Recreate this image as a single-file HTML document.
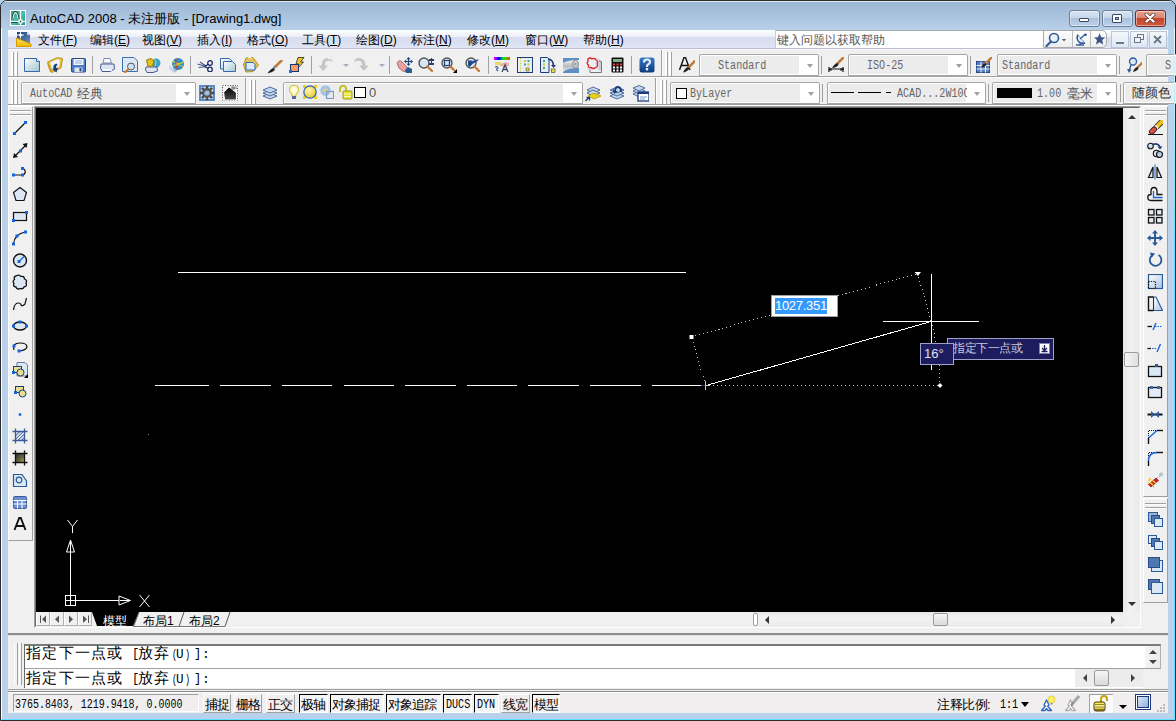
<!DOCTYPE html><html><head><meta charset="utf-8"><style>
*{margin:0;padding:0;box-sizing:border-box}
html,body{width:1176px;height:721px;overflow:hidden;background:#b9d1ea}
body{position:relative;font-family:"Liberation Sans",sans-serif;font-size:12px;color:#000}
div,span,svg{position:absolute;display:block}
.t{white-space:nowrap;line-height:15px}
.grip{width:1px;background:#a0a0a0;box-shadow:1px 0 0 #fff}
.vsep{width:1px;background:#a0a0a0;box-shadow:1px 0 0 #fff}
.hsep{height:1px;background:#a0a0a0;box-shadow:0 1px 0 #fff}
.combo{height:22px;border:1px solid #a5a5a5;border-radius:2px 2px 0 0;background:#fff;overflow:hidden}
.combo .fill{left:1px;top:1px;right:19px;bottom:1px;background:#ececec}
.combo .dd{right:0;top:0;width:18px;height:20px;background:#fff}
.combo .dd:after{content:"";position:absolute;left:7px;top:9px;border-left:3.5px solid transparent;border-right:3.5px solid transparent;border-top:4px solid #a0a0a0}
.mono{font-family:"Liberation Mono",monospace;font-size:12px;line-height:20px;color:#666;white-space:nowrap;transform:scaleX(.84);transform-origin:0 0}
</style></head><body>
<div style="left:0;top:0;width:1176px;height:721px;border:1px solid #2b2b2b;border-radius:7px 7px 0 0;background:#b9d1ea"></div>
<div style="left:1px;top:1px;width:1174px;height:29px;border-radius:6px 6px 0 0;background:linear-gradient(#dfe8f3 0px,#dfe8f3 1px,#9bb6d4 1px,#b9d0e9 29px)"></div>
<div style="left:1px;top:30px;width:7px;height:690px;background:#bad2ea"></div>
<div style="left:1168px;top:30px;width:7px;height:690px;background:#bad2ea"></div>
<svg style="left:10px;top:10px" width="16" height="16" viewBox="0 0 16 16"><defs><linearGradient id="g0" x1="0" y1="0" x2="1" y2="1"><stop offset="0" stop-color="#2aa894"/><stop offset=".5" stop-color="#4cc0ac"/><stop offset="1" stop-color="#1f9683"/></linearGradient></defs><rect x="0" y="0" width="16" height="16" fill="#fff"/><rect x="1" y="1" width="14" height="14" fill="url(#g0)"/><path d="M2.5 9.5 Q3.5 2 5.5 2 Q7.5 2 8.5 9.5" stroke="#0b3b34" stroke-width="2.2" fill="none"/><path d="M2.8 9.5 Q3.8 2.6 5.5 2.6 Q7.2 2.6 8.2 9.5" stroke="#e8fff8" stroke-width="1.1" fill="none"/><path d="M1 11.5 H15" stroke="#fff" stroke-width="1.2"/><path d="M1 12.5 H8" stroke="#0b3b34" stroke-width=".8"/><path d="M10.5 1 V15" stroke="#fff" stroke-width="1.2"/><rect x="8.5" y="9.5" width="4" height="4" fill="#fff"/><rect x="9.8" y="10.8" width="1.5" height="1.5" fill="#0b3b34"/></svg>
<div class="t" style="left:30px;top:11px;font-size:13px;color:#000">AutoCAD 2008 - 未注册版 - [Drawing1.dwg]</div>
<div style="left:1069px;top:10px;width:31px;height:17px;border:1px solid #6d7f96;border-radius:3px;background:linear-gradient(#d7e4f2 0%,#c6d7eb 45%,#a9c0dc 50%,#bcd1ea 100%);box-shadow:inset 0 0 0 1px rgba(255,255,255,.45)"></div>
<div style="left:1102px;top:10px;width:31px;height:17px;border:1px solid #6d7f96;border-radius:3px;background:linear-gradient(#d7e4f2 0%,#c6d7eb 45%,#a9c0dc 50%,#bcd1ea 100%);box-shadow:inset 0 0 0 1px rgba(255,255,255,.45)"></div>
<div style="left:1135px;top:10px;width:31px;height:17px;border:1px solid #6b2a2a;border-radius:3px;background:linear-gradient(#e8a393 0%,#d98472 45%,#c4452a 50%,#cf5a3b 100%);box-shadow:inset 0 0 0 1px rgba(255,255,255,.45)"></div>
<div style="left:1079px;top:18px;width:10px;height:4px;background:#fff;border:1px solid #3b4a5e;border-radius:1px"></div>
<div style="left:1112px;top:14px;width:10px;height:9px;background:#fff;border:1px solid #3b4a5e;border-radius:1px"></div>
<div style="left:1115px;top:17px;width:4px;height:3px;background:#a8bed8;border:1px solid #3b4a5e"></div>
<svg style="left:1144px;top:13px" width="12" height="10" viewBox="0 0 12 10"><path d="M2.5 1.5 L9.5 8.5 M9.5 1.5 L2.5 8.5" stroke="#5a3434" stroke-width="3.8" stroke-linecap="round"/><path d="M2.5 1.5 L9.5 8.5 M9.5 1.5 L2.5 8.5" stroke="#fff" stroke-width="2.4" stroke-linecap="round"/></svg>
<div style="left:8px;top:30px;width:1160px;height:19px;background:linear-gradient(#fdfdfe 0px,#eceff8 7px,#d6dcee 7px,#dfe5f3 18px,#b8bfd2 18px)"></div>
<svg style="left:16px;top:31px" width="16" height="16" viewBox="0 0 16 16"><defs><linearGradient id="gm1" x1="0" y1="0" x2="1" y2="1"><stop offset="0" stop-color="#1a3f78"/><stop offset="1" stop-color="#6f93c0"/></linearGradient><linearGradient id="gm2" x1="0" y1="0" x2="0" y2="1"><stop offset="0" stop-color="#ffe766"/><stop offset="1" stop-color="#e8b800"/></linearGradient></defs><path d="M1 1 H11 L14 4 V13 L1 7 Z" fill="url(#gm1)"/><path d="M11 1 L14 4 H11 Z" fill="#c9d6e6"/><circle cx="4.5" cy="4" r="1.6" fill="#fff"/><path d="M4.5 0.5 V7.5 M1 4 H8" stroke="#fff" stroke-width=".9"/><path d="M0.5 7.2 L15 13 V15.5 H0.5 Z" fill="url(#gm2)" stroke="#d89a00" stroke-width="1"/></svg>
<div class="t" style="left:38px;top:33px;font-size:12px">文件(<u>F</u>)</div>
<div class="t" style="left:90px;top:33px;font-size:12px">编辑(<u>E</u>)</div>
<div class="t" style="left:142px;top:33px;font-size:12px">视图(<u>V</u>)</div>
<div class="t" style="left:197px;top:33px;font-size:12px">插入(<u>I</u>)</div>
<div class="t" style="left:247px;top:33px;font-size:12px">格式(<u>O</u>)</div>
<div class="t" style="left:302px;top:33px;font-size:12px">工具(<u>T</u>)</div>
<div class="t" style="left:356px;top:33px;font-size:12px">绘图(<u>D</u>)</div>
<div class="t" style="left:411px;top:33px;font-size:12px">标注(<u>N</u>)</div>
<div class="t" style="left:467px;top:33px;font-size:12px">修改(<u>M</u>)</div>
<div class="t" style="left:525px;top:33px;font-size:12px">窗口(<u>W</u>)</div>
<div class="t" style="left:583px;top:33px;font-size:12px">帮助(<u>H</u>)</div>
<div style="left:775px;top:30px;width:269px;height:18px;background:#fff;border-top:1px solid #a9acb4;border-left:1px solid #c9ccd4"></div>
<div class="t" style="left:777px;top:33px;font-size:12px;color:#555">键入问题以获取帮助</div>
<div style="left:1043px;top:30px;width:64px;height:18px;background:linear-gradient(#fdfdfd,#eeeeee);border:1px solid #a9a9a9;border-radius:0 5px 5px 0"></div>
<div style="left:1072px;top:31px;width:1px;height:16px;background:#bdbdbd"></div>
<div style="left:1090px;top:31px;width:1px;height:16px;background:#bdbdbd"></div>
<svg style="left:1045px;top:32px" width="22" height="16" viewBox="0 0 22 16"><circle cx="9" cy="6" r="4.5" fill="#e8f0fa" stroke="#2f5b98" stroke-width="1.6"/><path d="M6 9.5 L1.5 14" stroke="#2f5b98" stroke-width="2.2" stroke-linecap="round"/><path d="M17 7 L21 7 L19 9.5 Z" fill="#555"/></svg>
<svg style="left:1075px;top:33px" width="12" height="13" viewBox="0 0 12 13"><path d="M2.5 1 Q0 5 3 9 Q6 12 10.5 10.5 Z" fill="#2a4f8f"/><path d="M3.5 2.5 Q2 5.5 4 8 Q6.5 10 9 9.5 Z" fill="#e6eef8"/><path d="M5 6 L10 1.5" stroke="#3a62a8" stroke-width="1.3"/><circle cx="10.5" cy="1.8" r="1.3" fill="#2a4f8f"/><path d="M6 10 L4.5 11.5 M1 12 H9" stroke="#3a62a8" stroke-width="1.4"/></svg>
<svg style="left:1094px;top:33px" width="12" height="12" viewBox="0 0 12 12"><path d="M5.6 0.3 L7.2 4.2 L11.3 4.4 L8.2 7.1 L9.2 11.6 L5.6 9.2 L2 11.6 L3 7.1 L-0.1 4.4 L4 4.2 Z" fill="#3b5587"/></svg>
<div style="left:1111px;top:31px;width:18px;height:17px;border:1px solid #b8c6d8;background:linear-gradient(#f4f8fc,#dde8f4)"></div>
<div style="left:1130px;top:31px;width:18px;height:17px;border:1px solid #b8c6d8;background:linear-gradient(#f4f8fc,#dde8f4)"></div>
<div style="left:1149px;top:31px;width:18px;height:17px;border:1px solid #b8c6d8;background:linear-gradient(#f4f8fc,#dde8f4)"></div>
<div style="left:1116px;top:42px;width:8px;height:2px;background:#6d7784"></div>
<svg style="left:1134px;top:34px" width="10" height="10" viewBox="0 0 10 10"><rect x="3.5" y="0.5" width="6" height="5" fill="none" stroke="#6d7784" stroke-width="1"/><rect x="0.5" y="3.5" width="6" height="5" fill="#eef3f9" stroke="#6d7784" stroke-width="1"/></svg>
<svg style="left:1153px;top:35px" width="9" height="9" viewBox="0 0 9 9"><path d="M1 1 L8 8 M8 1 L1 8" stroke="#6d7784" stroke-width="1.8"/></svg>
<div style="left:8px;top:49px;width:1160px;height:58px;background:#f0f0f0"></div>
<div style="left:8px;top:49px;width:1160px;height:1px;background:#fafafa"></div>
<div class="hsep" style="left:8px;top:76px;width:1160px"></div>
<div class="hsep" style="left:8px;top:104px;width:1160px"></div>
<div style="left:11px;top:52px;width:2px;height:24px;background:#fff"></div>
<div style="left:13px;top:52px;width:1px;height:24px;background:#a0a0a0"></div>
<div style="left:15px;top:52px;width:2px;height:24px;background:#fff"></div>
<div style="left:17px;top:52px;width:1px;height:24px;background:#a0a0a0"></div>
<svg style="left:24px;top:58px" width="16" height="16" viewBox="0 0 16 16"><defs><linearGradient id="gn" x1="0" y1="0" x2="1" y2="1"><stop offset="0" stop-color="#ffffff"/><stop offset="1" stop-color="#9fc3cf"/></linearGradient></defs><path d="M0.5 0.5 H12.5 L15.5 3.5 V13.5 H0.5 Z" fill="url(#gn)" stroke="#3568ad" stroke-width="1"/><path d="M12.5 0.5 V3.5 H15.5" fill="#fff" stroke="#3568ad" stroke-width="1"/></svg>
<svg style="left:47px;top:57px" width="16" height="16" viewBox="0 0 16 16"><path d="M0.5 5 L10.5 0.5 L15.5 1.5 L14 11 L5 15.5 Z" fill="#e9be3c" stroke="#b8901c" stroke-width=".9"/><path d="M3 5.5 L11 2 L13 3 L12 10 L5.5 13 Z" fill="#eef6fc"/><path d="M0.5 5 L5 15.5 L3 15 L0.5 8 Z" fill="#c99a20"/><path d="M9.5 6.5 Q5.5 7.5 6.5 11.5 L5 12 L9.5 15.5 L11 10.5 L9 11 Q8.5 9 10.5 8 Z" fill="#1d3f78"/></svg>
<svg style="left:71px;top:58px" width="16" height="16" viewBox="0 0 16 16"><rect x="0.5" y="0.5" width="14" height="13.5" rx="1" fill="#4b7cc4" stroke="#22467f"/><rect x="2.5" y="1" width="10" height="6" fill="#f4f7fc"/><path d="M4 3 H11 M4 5 H11" stroke="#8aa6d0" stroke-width=".9"/><rect x="3.5" y="9.5" width="8" height="4.5" fill="#dfe6f0"/><rect x="8.5" y="10" width="2" height="3.5" fill="#2a4f8a"/></svg>
<div style="left:92px;top:56px;width:1px;height:18px;background:#a0a0a0"></div>
<svg style="left:100px;top:58px" width="15" height="14" viewBox="0 0 15 14"><path d="M4 0.5 H10 L11.5 5 H3 Z" fill="#fff" stroke="#7e8db8"/><path d="M1 6 H14 L14.5 11 L10 13.5 H2 L0.5 10 Z" fill="#dfe4f2" stroke="#4a5c95"/><path d="M3 12 H12" stroke="#fff" stroke-width="1.5"/></svg>
<svg style="left:122px;top:57px" width="16" height="16" viewBox="0 0 16 16"><path d="M0.5 0.5 H12 L15.5 4 V14.5 H0.5 Z" fill="#dbe9f4" stroke="#3d70b2"/><circle cx="9" cy="9.5" r="3.5" fill="#cde1f3" stroke="#556"/><path d="M6.5 12 L2.5 16" stroke="#d47a2a" stroke-width="2"/></svg>
<svg style="left:145px;top:57px" width="16" height="16" viewBox="0 0 16 16"><circle cx="11" cy="6" r="4.5" fill="#3fa0c8"/><path d="M9 2 Q13 6 9 10" stroke="#9fe0a0" fill="none"/><path d="M1 10 H12 L12.5 14 L8 15.5 H2 L0.5 13 Z" fill="#dfe4f2" stroke="#4a5c95"/><path d="M1.5 3 L6 1.5 L9 4 L7.5 9 L3 9.5 Z" fill="#e6c21a" stroke="#9a7a00"/></svg>
<svg style="left:168px;top:57px" width="16" height="16" viewBox="0 0 16 16"><path d="M1 8 L6 12 L6 16 L1 12 Z" fill="#c9d4e8"/><path d="M6 12 L9 10 L9 14 L6 16 Z" fill="#aebbd3"/><circle cx="10" cy="7" r="6" fill="#2f8fc9"/><path d="M5 4 Q10 9 15 5" stroke="#e0d020" fill="none" stroke-width="1.2"/><path d="M8 1.5 Q7 8 10 13" stroke="#d23b2a" fill="none" stroke-width="1.2"/><path d="M4.5 9 Q10 6 15.5 10" stroke="#e0d020" fill="none" stroke-width="1"/></svg>
<div style="left:190px;top:56px;width:1px;height:18px;background:#a0a0a0"></div>
<svg style="left:197px;top:60px" width="16" height="12" viewBox="0 0 16 12"><path d="M0.5 4 L9 6.5 M1.5 7.5 L9 6.8 M3 2 L9 6" stroke="#445a8a" stroke-width="1.1"/><circle cx="13" cy="3" r="2.3" fill="none" stroke="#1d2a66" stroke-width="1.3"/><circle cx="13" cy="9.5" r="2.3" fill="none" stroke="#1d2a66" stroke-width="1.3"/><path d="M8 6.5 L11.2 4.2 M8 6.8 L11.2 8.5" stroke="#1d2a66" stroke-width="1.2"/></svg>
<svg style="left:220px;top:58px" width="16" height="14" viewBox="0 0 16 14"><defs><linearGradient id="gc" x1="0" y1="0" x2="1" y2="1"><stop offset="0" stop-color="#fff"/><stop offset="1" stop-color="#a8c8d4"/></linearGradient></defs><path d="M0.5 0.5 H9.5 L11.5 2.5 V11 H0.5 Z" fill="url(#gc)" stroke="#3568ad"/><path d="M3.5 3.5 H12.5 L15.5 6.5 V13.5 H3.5 Z" fill="url(#gc)" stroke="#3568ad"/></svg>
<svg style="left:243px;top:57px" width="16" height="16" viewBox="0 0 16 16"><path d="M3 1 L10 0.5 L15.5 8 L10 14.5 L3 15 L0.5 8 Z" fill="#e3c55a" stroke="#b1902a"/><path d="M3 5.5 H10 L12 7.5 V13 H3 Z" fill="#dcebf6" stroke="#3568ad"/><path d="M5 1 Q7 -0.5 9 1.5" stroke="#fff" fill="none"/></svg>
<svg style="left:267px;top:60px" width="16" height="14" viewBox="0 0 16 14"><path d="M14.5 0.5 L8 7" stroke="#c07a3a" stroke-width="2.6" stroke-linecap="round"/><path d="M8.5 6 L6 9" stroke="#7a8aa0" stroke-width="2"/><path d="M6.5 8 Q3 9 0.5 13.5 Q5 13 8 10 Z" fill="#222"/></svg>
<svg style="left:289px;top:57px" width="16" height="16" viewBox="0 0 16 16"><path d="M9 0.5 L15 0.5 L11.5 5 L14.5 5 L8 12 L10 7 L7 7 Z" fill="#f3c623" stroke="#222" stroke-width=".8"/><rect x="1.5" y="7.5" width="8" height="7" fill="#f29a6a" stroke="#16346e"/><rect x="0" y="13" width="3" height="3" fill="#1569d9"/></svg>
<div style="left:311px;top:56px;width:1px;height:18px;background:#a0a0a0"></div>
<svg style="left:318px;top:56px" width="16" height="16" viewBox="0 0 16 16"><path d="M5 15 L0.5 9.5 H3.5 Q3.5 2 10 2 Q15 2 14.5 6 Q12 4 9 5 Q6.5 6.5 7 9.5 H10 Z" fill="#c3c6c9"/><path d="M10 2.5 Q13 2.5 14 4.5" stroke="#fff" fill="none" stroke-width=".8"/></svg>
<div style="left:343px;top:64px;border-left:3px solid transparent;border-right:3px solid transparent;border-top:3px solid #a8aac0"></div>
<svg style="left:353px;top:56px" width="16" height="16" viewBox="0 0 16 16"><path d="M11 15 L15.5 9.5 H12.5 Q12.5 2 6 2 Q1 2 1.5 6 Q4 4 7 5 Q9.5 6.5 9 9.5 H6 Z" fill="#c3c6c9"/></svg>
<div style="left:379px;top:64px;border-left:3px solid transparent;border-right:3px solid transparent;border-top:3px solid #a8aac0"></div>
<div style="left:389px;top:56px;width:1px;height:18px;background:#a0a0a0"></div>
<svg style="left:396px;top:57px" width="17" height="16" viewBox="0 0 17 16"><path d="M1 6 Q3 2 6 5 L12 11 L11 15 Q6 15 3 11 Z" fill="#e8a0a0" stroke="#b57070"/><path d="M9 13 L12 10 L16 12 L16 16 L10 16 Z" fill="#2a5a9a"/><path d="M12.5 1 V8 M9 4.5 H16" stroke="#1f3f7a" stroke-width="1.2"/><path d="M12.5 0 L10.5 2.2 H14.5 Z M12.5 9 L10.5 6.8 H14.5 Z M8 4.5 L10.2 2.5 V6.5 Z M17 4.5 L14.8 2.5 V6.5 Z" fill="#1f3f7a"/></svg>
<svg style="left:418px;top:57px" width="16" height="16" viewBox="0 0 16 16"><circle cx="6" cy="6" r="5" fill="#d7e6f4" stroke="#555" stroke-width="1.4"/><path d="M9.5 9.5 L14 14" stroke="#c87a35" stroke-width="2.4" stroke-linecap="round"/><path d="M11 3 H16 M13.5 0.5 V5.5 M11 7 H16" stroke="#1f3f7a" stroke-width="1.3" shape-rendering="crispEdges"/></svg>
<svg style="left:441px;top:57px" width="16" height="16" viewBox="0 0 16 16"><circle cx="6" cy="6" r="5" fill="#d7e6f4" stroke="#555" stroke-width="1.4"/><rect x="3.5" y="3.5" width="5" height="5" fill="none" stroke="#1f3f7a" stroke-width="1.2"/><path d="M9.5 9.5 L13 13" stroke="#c87a35" stroke-width="2.4" stroke-linecap="round"/><path d="M12 16 L16 12 V16 Z" fill="#000"/></svg>
<svg style="left:465px;top:57px" width="16" height="16" viewBox="0 0 16 16"><circle cx="6" cy="6" r="5" fill="#d7e6f4" stroke="#555" stroke-width="1.4"/><path d="M9.5 9.5 L14 14" stroke="#c87a35" stroke-width="2.4" stroke-linecap="round"/><path d="M3 8.5 V3.5 H8 L6.5 5 Q10 2 14 2.5 Q12 5 8 6.5 L4.5 10 Z" fill="#1f4a8a"/></svg>
<div style="left:488px;top:56px;width:1px;height:18px;background:#a0a0a0"></div>
<svg style="left:494px;top:57px" width="16" height="16" viewBox="0 0 16 16"><rect x="0" y="0" width="16" height="3" fill="url(#rb)"/><defs><linearGradient id="rb"><stop offset="0" stop-color="#f0f"/><stop offset=".3" stop-color="#00f"/><stop offset=".6" stop-color="#0f0"/><stop offset="1" stop-color="#f40"/></linearGradient></defs><rect x="1" y="5" width="6" height="3" fill="#e8d870"/><path d="M5 8 Q10 4 15 6 L15 9 Q10 10 7 9 Z" fill="#e7b0a8"/><path d="M1 10 Q4 9 4 11 Q1 12 4 14" stroke="#3a5a9a" fill="none" stroke-width="1.2"/><path d="M8 15 L11 8 L14 15 M9 12.5 H13" stroke="#3a4a6a" fill="none" stroke-width="1.3"/></svg>
<svg style="left:517px;top:57px" width="16" height="16" viewBox="0 0 16 16"><rect x="0.5" y="0.5" width="15" height="15" fill="#e8eef8" stroke="#1d3b7a"/><path d="M3.5 1 V15" stroke="#d8c020" stroke-dasharray="1 1.5"/><rect x="7" y="3" width="2" height="2" fill="#c8d030"/><rect x="10.5" y="3" width="2" height="2" fill="#4aa878"/><rect x="7" y="6.5" width="2" height="2" fill="#4aa878"/><rect x="10.5" y="6.5" width="2" height="2" fill="#c8d030"/><rect x="9" y="11" width="3" height="3" fill="#e8e040" stroke="#333" stroke-width=".5"/></svg>
<svg style="left:540px;top:57px" width="16" height="16" viewBox="0 0 16 16"><path d="M0.5 0.5 H7.5 L9 2 V15.5 H0.5 Z" fill="#e3ebf6" stroke="#1d3b7a"/><rect x="3" y="3" width="2" height="2" fill="#4aa878"/><rect x="3" y="6.5" width="2" height="2" fill="#c8d030"/><rect x="3" y="10" width="2" height="2" fill="#4aa878"/><path d="M8 2 Q13 2 13.5 9" stroke="#1d3b7a" fill="none" stroke-width="1.6"/><path d="M11 8 H16 L13.5 11 Z" fill="#1d3b7a"/><rect x="11.5" y="12" width="3.5" height="3.5" fill="#e8e040" stroke="#333" stroke-width=".6"/></svg>
<svg style="left:563px;top:57px" width="16" height="16" viewBox="0 0 16 16"><defs><linearGradient id="gss" x1="0" y1="0" x2="0" y2="1"><stop offset="0" stop-color="#f4f4f4"/><stop offset=".5" stop-color="#b8bcc0"/><stop offset="1" stop-color="#e8e8e8"/></linearGradient></defs><rect x="0" y="1" width="16" height="15" fill="#5b8fc6"/><path d="M0 6 Q4 3 16 3 V11 Q4 11 0 15 Z" fill="url(#gss)"/><ellipse cx="12.5" cy="7" rx="2.8" ry="3.6" fill="#d8dadc" stroke="#888"/><ellipse cx="12.5" cy="7" rx="1.2" ry="1.6" fill="#999"/></svg>
<svg style="left:586px;top:57px" width="16" height="16" viewBox="0 0 16 16"><path d="M4 4.5 H15.5 V15.5 H4 Z" fill="none" stroke="#777"/><path d="M2.5 3 H14 V14" fill="none" stroke="#aaa"/><rect x="1" y="1.5" width="12" height="11" fill="#d0dcec"/><path d="M2 2 Q4 0 6 2 Q9 0.5 10 3 Q12.5 4 11 6.5 Q12.5 9.5 9.5 10.5 Q7 12.5 5 10.5 Q2 11 2.5 8 Q0 6 2 4.5 Z" fill="#e8eef6" stroke="#e82020" stroke-width="1.3"/></svg>
<svg style="left:611px;top:57px" width="13" height="16" viewBox="0 0 13 16"><rect x="0.5" y="0.5" width="12" height="15" rx="1" fill="#111"/><rect x="2" y="2" width="9" height="3" fill="#7fb07f"/><g fill="#f33"><rect x="2" y="6.5" width="2" height="2"/><rect x="5.5" y="6.5" width="2" height="2"/><rect x="9" y="6.5" width="2" height="2"/></g><g fill="#fff"><rect x="2" y="9.5" width="2" height="2"/><rect x="5.5" y="9.5" width="2" height="2"/><rect x="9" y="9.5" width="2" height="2"/><rect x="2" y="12.5" width="2" height="2"/><rect x="5.5" y="12.5" width="2" height="2"/><rect x="9" y="12.5" width="2" height="2"/></g></svg>
<div style="left:631px;top:56px;width:1px;height:18px;background:#a0a0a0"></div>
<svg style="left:639px;top:57px" width="16" height="16" viewBox="0 0 16 16"><defs><linearGradient id="gh" x1="0" y1="0" x2="0" y2="1"><stop offset="0" stop-color="#3b7ac8"/><stop offset="1" stop-color="#0e3a7a"/></linearGradient></defs><rect x="0.5" y="0.5" width="15" height="15" rx="2.5" fill="url(#gh)"/><path d="M5 5.5 Q5 2.5 8 2.5 Q11 2.5 11 5 Q11 6.5 9 7.5 Q8 8 8 10" stroke="#e6f0ff" stroke-width="2.2" fill="none"/><rect x="6.8" y="11" width="2.4" height="2.4" fill="#e6f0ff"/></svg>
<div style="left:661px;top:50px;width:1px;height:26px;background:#a0a0a0"></div>
<div style="left:662px;top:50px;width:1px;height:26px;background:#fff"></div>
<div style="left:665px;top:52px;width:2px;height:24px;background:#fff"></div>
<div style="left:667px;top:52px;width:1px;height:24px;background:#a0a0a0"></div>
<div style="left:669px;top:52px;width:2px;height:24px;background:#fff"></div>
<div style="left:671px;top:52px;width:1px;height:24px;background:#a0a0a0"></div>
<svg style="left:679px;top:57px" width="16" height="16" viewBox="0 0 16 16"><path d="M0.5 13 L5 0.5 H6.5 L11 13 M2.5 8.5 H9" stroke="#111" stroke-width="1.4" fill="none"/><path d="M15.5 4.5 L9 11" stroke="#c07a3a" stroke-width="2.6" stroke-linecap="round"/><path d="M9.5 10 Q6 10.5 4 15.5 Q8 15 10.5 11.5 Z" fill="#222"/></svg>
<div class="combo" style="left:699px;top:54px;width:120px"><div class="fill"></div><div class="mono" style="left:18px;top:1px">Standard</div><div class="dd"></div></div>
<div style="left:821px;top:56px;width:1px;height:18px;background:#a0a0a0"></div>
<svg style="left:828px;top:57px" width="16" height="16" viewBox="0 0 16 16"><path d="M15.5 0.5 L9 7" stroke="#c07a3a" stroke-width="2.6" stroke-linecap="round"/><path d="M9.5 6 Q6 7 4 11 Q8 11 10.5 8 Z" fill="#222"/><path d="M0.5 12 H16 M1 10 V15 M15 10 V15" stroke="#111" stroke-width="1.2"/><path d="M0.5 12.5 L3.5 11 V14 Z M15.5 12.5 L12.5 11 V14 Z" fill="#111"/></svg>
<div class="combo" style="left:848px;top:54px;width:120px"><div class="fill"></div><div class="mono" style="left:18px;top:1px">ISO-25</div><div class="dd"></div></div>
<div style="left:970px;top:56px;width:1px;height:18px;background:#a0a0a0"></div>
<svg style="left:976px;top:57px" width="16" height="16" viewBox="0 0 16 16"><rect x="0.5" y="4.5" width="13" height="11" fill="#5a7fc0" stroke="#2a4a8a"/><path d="M0.5 8.5 H13.5 M0.5 12 H13.5 M5 4.5 V15.5 M9.5 4.5 V15.5" stroke="#e8eef8" stroke-width="1"/><path d="M15.5 0.5 L9 7" stroke="#c07a3a" stroke-width="2.4" stroke-linecap="round"/><path d="M9.5 6 Q6 7 5 10.5 Q8 10.5 10.5 8 Z" fill="#222"/></svg>
<div class="combo" style="left:997px;top:54px;width:120px"><div class="fill"></div><div class="mono" style="left:4px;top:1px">Standard</div><div class="dd"></div></div>
<div style="left:1119px;top:56px;width:1px;height:18px;background:#a0a0a0"></div>
<svg style="left:1126px;top:57px" width="16" height="16" viewBox="0 0 16 16"><circle cx="7" cy="4.5" r="3.5" fill="#dbe8f5" stroke="#2a5a9a" stroke-width="1.3"/><path d="M5 8 L3 14" stroke="#2a5a9a" stroke-width="1.3"/><path d="M1 12 L3 16 L5.5 12.5 Z" fill="#2a5a9a"/><path d="M16 6 L11 11" stroke="#c07a3a" stroke-width="2.4" stroke-linecap="round"/><path d="M11.5 10 Q8 11 7 15 Q10 14.5 12.5 12 Z" fill="#222"/></svg>
<div class="combo" style="left:1146px;top:54px;width:40px"><div class="fill" style="right:1px"></div><div class="mono" style="left:18px;top:1px">S</div></div>
<div style="left:11px;top:80px;width:2px;height:24px;background:#fff"></div>
<div style="left:13px;top:80px;width:1px;height:24px;background:#a0a0a0"></div>
<div style="left:15px;top:80px;width:2px;height:24px;background:#fff"></div>
<div style="left:17px;top:80px;width:1px;height:24px;background:#a0a0a0"></div>
<div class="combo" style="left:21px;top:82px;width:175px"><div class="fill"></div><div class="t" style="left:55px;top:2px;font-size:13px;line-height:17px;color:#555">经典</div><div class="mono" style="left:8px;top:1px">AutoCAD</div><div class="dd"></div></div>
<svg style="left:199px;top:85px" width="16" height="16" viewBox="0 0 16 16"><rect x="0" y="0" width="16" height="16" fill="#5b8cc4"/><rect x="2" y="2" width="12" height="12" fill="#c8daee"/><g stroke="#4a4a4a" stroke-width="2.4"><path d="M8 0.8 V15.2 M0.8 8 H15.2 M2.9 2.9 L13.1 13.1 M13.1 2.9 L2.9 13.1"/></g><circle cx="8" cy="8" r="5" fill="#555"/><circle cx="8" cy="8" r="2.6" fill="#9cc0e6"/></svg>
<svg style="left:222px;top:85px" width="16" height="16" viewBox="0 0 16 16"><rect x="0.5" y="0.5" width="15" height="15" fill="none" stroke="#555" stroke-dasharray="1 1.5"/><path d="M1.5 7 L7 1.5 L14.5 7.5 V15 H2.5 Z" fill="url(#gho)" stroke="#fff" stroke-width="1.2"/><path d="M10 1 V5 M12 1 V5 M10 3 H15" stroke="#555" stroke-width=".8"/><defs><linearGradient id="gho" x1="0" y1="0" x2="0" y2="1"><stop offset="0" stop-color="#000"/><stop offset="1" stop-color="#4a4a4a"/></linearGradient></defs></svg>
<div style="left:245px;top:78px;width:1px;height:26px;background:#a0a0a0"></div>
<div style="left:246px;top:78px;width:1px;height:26px;background:#fff"></div>
<div style="left:249px;top:80px;width:2px;height:24px;background:#fff"></div>
<div style="left:251px;top:80px;width:1px;height:24px;background:#a0a0a0"></div>
<div style="left:253px;top:80px;width:2px;height:24px;background:#fff"></div>
<div style="left:255px;top:80px;width:1px;height:24px;background:#a0a0a0"></div>
<svg style="left:262px;top:85px" width="16" height="16" viewBox="0 0 16 16"><g fill="#c4d8ee" stroke="#3f5f90" stroke-width=".9"><path d="M1 11 L8 8 L15 11 L8 14 Z"/><path d="M1 8 L8 5 L15 8 L8 11 Z"/><path d="M1 5 L8 2 L15 5 L8 8 Z"/></g></svg>
<div class="combo" style="left:283px;top:82px;width:300px"><div class="fill"></div><div class="dd"></div></div>
<svg style="left:289px;top:85px" width="10" height="15" viewBox="0 0 10 15"><path d="M5 0.5 Q0.5 0.5 0.5 5 Q0.5 7 3 9 V11 H7 V9 Q9.5 7 9.5 5 Q9.5 0.5 5 0.5 Z" fill="#fffbe0" stroke="#d7c43a" stroke-width="1.2"/><rect x="3" y="11" width="4" height="3" fill="#5a6a9a"/></svg>
<svg style="left:303px;top:85px" width="14" height="14" viewBox="0 0 14 14"><defs><radialGradient id="gsun" cx=".4" cy=".35" r=".7"><stop offset="0" stop-color="#fff7b0"/><stop offset="1" stop-color="#e8c820"/></radialGradient></defs><rect x="0" y="0" width="3" height="3" fill="#f0d020"/><rect x="11" y="0" width="3" height="3" fill="#f0d020"/><rect x="0" y="11" width="3" height="3" fill="#f0d020"/><rect x="11" y="11" width="3" height="3" fill="#f0d020"/><circle cx="7" cy="7" r="6.2" fill="url(#gsun)" stroke="#2a64c0" stroke-width="1.2"/></svg>
<svg style="left:320px;top:85px" width="14" height="14" viewBox="0 0 14 14"><circle cx="5.5" cy="5.5" r="5.2" fill="#9cc0e6"/><circle cx="5.5" cy="5.5" r="2" fill="#e0d890"/><path d="M5.5 1 V10 M1 5.5 H10 M2.5 2.5 L8.5 8.5 M8.5 2.5 L2.5 8.5" stroke="#d8d090" stroke-width=".8"/><rect x="6.5" y="6.5" width="7" height="7" fill="none" stroke="#7a9ac8" stroke-width="1.2"/></svg>
<svg style="left:338px;top:85px" width="15" height="15" viewBox="0 0 15 15"><path d="M2 7 V3.5 Q2 0.8 5 0.8 Q8 0.8 8 3.5 V6" stroke="#c8c020" stroke-width="2" fill="none"/><rect x="5" y="6" width="9" height="8" rx="1" fill="#e8e030" stroke="#a09a10"/><path d="M6 9 H13 M6 11.5 H13" stroke="#fff" stroke-width=".8"/></svg>
<div style="left:354px;top:87px;width:12px;height:11px;border:1.5px solid #000;background:#fff"></div>
<div class="t" style="left:369px;top:85px;font-size:13px;color:#555">0</div>
<svg style="left:585px;top:85px" width="16" height="17" viewBox="0 0 16 17"><g fill="#c4d8ee" stroke="#3f5f90" stroke-width=".9"><path d="M2 5 L8 2 L15 5 L8 8 Z"/><path d="M2 8 L8 5 L15 8 L8 11 Z"/></g><path d="M3 11 L9 8 L16 11 L9 14 Z" fill="#e8d020" stroke="#b09a00" stroke-width=".8"/><path d="M0.5 16 L4 12.5 M1.5 12.5 H4.5 V15.5" stroke="#1d3b7a" stroke-width="1.3" fill="none"/></svg>
<svg style="left:609px;top:85px" width="16" height="16" viewBox="0 0 16 16"><g fill="#c4d8ee" stroke="#3f5f90" stroke-width=".9"><path d="M1 11 L8 8 L15 11 L8 14 Z"/><path d="M1 8 L8 5 L15 8 L8 11 Z"/><path d="M1 5 L8 2 L15 5 L8 8 Z"/></g><path d="M13 7 Q13 0.5 8.5 1 Q5 1.5 5.5 5 L3.5 4 L5 9 L9 6 L7 6 Q7 3 9 3 Q11 3 11 7 Z" fill="#1d3b7a"/></svg>
<svg style="left:632px;top:85px" width="17" height="17" viewBox="0 0 17 17"><g fill="#c4d8ee" stroke="#3f5f90" stroke-width=".9"><path d="M1 9 L7 6 L13 9 L7 12 Z"/><path d="M1 6 L7 3 L13 6 L7 9 Z"/><path d="M1 3 L7 0.5 L13 3 L7 6 Z"/></g><rect x="6" y="7" width="11" height="9" fill="#fff" stroke="#1d3b7a" stroke-width="1.3"/><rect x="6" y="7" width="11" height="2" fill="#1d3b7a"/><path d="M8 12 H15 M8 14 H13" stroke="#7a9ac8"/></svg>
<div style="left:655px;top:78px;width:1px;height:26px;background:#a0a0a0"></div>
<div style="left:656px;top:78px;width:1px;height:26px;background:#fff"></div>
<div style="left:660px;top:80px;width:2px;height:24px;background:#fff"></div>
<div style="left:662px;top:80px;width:1px;height:24px;background:#a0a0a0"></div>
<div style="left:664px;top:80px;width:2px;height:24px;background:#fff"></div>
<div style="left:666px;top:80px;width:1px;height:24px;background:#a0a0a0"></div>
<div class="combo" style="left:670px;top:82px;width:150px"><div class="fill"></div><div style="left:5px;top:5px;width:11px;height:11px;border:1px solid #000;background:#fff"></div><div class="mono" style="left:19px;top:1px">ByLayer</div><div class="dd"></div></div>
<div style="left:822px;top:84px;width:1px;height:18px;background:#a0a0a0"></div>
<div class="combo" style="left:827px;top:82px;width:159px"><div class="fill"></div><div style="left:3px;top:9px;width:23px;height:1px;background:#000"></div><div style="left:30px;top:9px;width:23px;height:1px;background:#000"></div><div style="left:58px;top:9px;width:5px;height:1px;background:#000"></div><div class="mono" style="left:69px;top:1px">ACAD...2W10C</div><div class="dd"></div></div>
<div style="left:988px;top:84px;width:1px;height:18px;background:#a0a0a0"></div>
<div class="combo" style="left:992px;top:82px;width:125px"><div class="fill"></div><div style="left:4px;top:5px;width:35px;height:10px;background:#000"></div><div class="t" style="left:74px;top:2px;font-size:13px;line-height:17px;color:#555">毫米</div><div class="mono" style="left:44px;top:1px">1.00</div><div class="dd"></div></div>
<div style="left:1120px;top:84px;width:1px;height:18px;background:#a0a0a0"></div>
<div class="combo" style="left:1123px;top:82px;width:60px"><div class="fill" style="right:1px"></div><div class="t" style="left:8px;top:2px;font-size:13px;color:#333">随颜色</div></div>
<div style="left:8px;top:105px;width:1160px;height:608px;background:#f0f0f0"></div>
<div style="left:8px;top:104px;width:1160px;height:1px;background:#a0a0a0"></div>
<div style="left:8px;top:105px;width:1160px;height:1px;background:#fff"></div>
<div style="left:34px;top:106px;width:1107px;height:522px;border-top:1px solid #a0a0a0;border-left:1px solid #a0a0a0;border-right:1px solid #fff;border-bottom:1px solid #fff"></div>
<div style="left:35px;top:107px;width:1105px;height:520px;border-top:1px solid #696969;border-left:1px solid #696969;border-right:1px solid #e3e3e3;border-bottom:1px solid #e3e3e3"></div>
<div style="left:36px;top:108px;width:1087px;height:504px;background:#000"></div>
<div style="left:8px;top:106px;width:25px;height:435px;border-left:1px solid #fff;border-top:1px solid #fff;border-right:1px solid #a0a0a0;border-bottom:1px solid #a0a0a0"></div>
<div style="left:10px;top:110px;width:21px;height:1px;background:#a0a0a0;box-shadow:0 1px 0 #fff"></div>
<div style="left:10px;top:114px;width:21px;height:1px;background:#a0a0a0;box-shadow:0 1px 0 #fff"></div>
<div style="left:1143px;top:106px;width:25px;height:391px;border-left:1px solid #fff;border-top:1px solid #fff;border-right:1px solid #a0a0a0;border-bottom:1px solid #a0a0a0"></div>
<div style="left:1145px;top:110px;width:21px;height:1px;background:#a0a0a0;box-shadow:0 1px 0 #fff"></div>
<div style="left:1145px;top:114px;width:21px;height:1px;background:#a0a0a0;box-shadow:0 1px 0 #fff"></div>
<div style="left:1143px;top:498px;width:25px;height:105px;border-left:1px solid #fff;border-top:1px solid #fff;border-right:1px solid #a0a0a0;border-bottom:1px solid #a0a0a0"></div>
<div style="left:1145px;top:503px;width:21px;height:1px;background:#a0a0a0;box-shadow:0 1px 0 #fff"></div>
<div style="left:1145px;top:507px;width:21px;height:1px;background:#a0a0a0;box-shadow:0 1px 0 #fff"></div>
<div style="left:1123px;top:108px;width:17px;height:504px;background:linear-gradient(90deg,#e6e6e6,#f2f2f2 40%,#eaeaea)"></div>
<div style="left:1128px;top:115px;border-left:4px solid transparent;border-right:4px solid transparent;border-bottom:4px solid #333"></div>
<div style="left:1128px;top:602px;border-left:4px solid transparent;border-right:4px solid transparent;border-top:4px solid #333"></div>
<div style="left:1124px;top:352px;width:15px;height:15px;border:1px solid #9a9a9a;border-radius:2px;background:linear-gradient(90deg,#f4f4f4,#e0e0e0)"></div>
<div style="left:1123px;top:612px;width:17px;height:15px;background:#f0f0f0"></div>
<div style="left:36px;top:612px;width:1087px;height:15px;background:#f0f0f0"></div>
<div style="left:36px;top:612px;width:14px;height:14px;border-right:1px solid #b0b0b0;border-bottom:1px solid #b0b0b0;border-left:1px solid #fff"></div>
<div style="left:50px;top:612px;width:14px;height:14px;border-right:1px solid #b0b0b0;border-bottom:1px solid #b0b0b0;border-left:1px solid #fff"></div>
<div style="left:64px;top:612px;width:14px;height:14px;border-right:1px solid #b0b0b0;border-bottom:1px solid #b0b0b0;border-left:1px solid #fff"></div>
<div style="left:78px;top:612px;width:14px;height:14px;border-right:1px solid #b0b0b0;border-bottom:1px solid #b0b0b0;border-left:1px solid #fff"></div>
<svg style="left:36px;top:612px" width="56" height="15" viewBox="0 0 56 15"><path d="M4.5 3.5 V11" stroke="#555"/><path d="M10 3.5 L6 7.25 L10 11 Z" fill="#555"/><path d="M23 3.5 L19 7.25 L23 11 Z" fill="#555"/><path d="M33 3.5 L37 7.25 L33 11 Z" fill="#555"/><path d="M47 3.5 L51 7.25 L47 11 Z" fill="#555"/><path d="M52.5 3.5 V11" stroke="#555"/></svg>
<svg style="left:92px;top:612px" width="140" height="16" viewBox="0 0 140 16"><path d="M0 0 H47 L41 14 H5 Z" fill="#000"/><path d="M47 0 L41.5 14.5 M92 0 L87 14.5 M138 0 L133 14.5" stroke="#555" fill="none"/><path d="M41 14.5 H133" stroke="#777"/></svg>
<div class="t" style="left:103px;top:613px;font-size:12px;line-height:16px;color:#fff">模型</div>
<div class="t" style="left:143px;top:613px;font-size:12px;line-height:16px;color:#000">布局1</div>
<div class="t" style="left:189px;top:613px;font-size:12px;line-height:16px;color:#000">布局2</div>
<div style="left:753px;top:612px;width:370px;height:15px;background:linear-gradient(#e6e6e6,#f2f2f2 40%,#eaeaea)"></div>
<div style="left:753px;top:613px;width:5px;height:13px;border:1px solid #a0a0a0;border-radius:2px;background:#fff"></div>
<div style="left:765px;top:616px;border-top:4px solid transparent;border-bottom:4px solid transparent;border-right:4px solid #333"></div>
<div style="left:1111px;top:616px;border-top:4px solid transparent;border-bottom:4px solid transparent;border-left:4px solid #333"></div>
<div style="left:933px;top:613px;width:15px;height:13px;border:1px solid #9a9a9a;border-radius:2px;background:linear-gradient(#f6f6f6,#dadada)"></div>
<div style="left:8px;top:633px;width:1160px;height:1px;background:#8c8c8c"></div>
<div style="left:8px;top:634px;width:1160px;height:1px;background:#8c8c8c"></div>
<div style="left:8px;top:635px;width:1160px;height:1px;background:#e3e3e3"></div>
<div style="left:14px;top:643px;width:8px;height:42px;border-left:1px solid #fff;border-right:1px solid #a0a0a0"></div>
<div style="left:17px;top:643px;width:3px;height:42px;border-left:1px solid #a0a0a0;border-right:1px solid #fff"></div>
<div style="left:24px;top:644px;width:1137px;height:44px;background:#fff;border-top:2px solid #7a7a7a;border-left:1px solid #696969;border-right:1px solid #b0b0b0"></div>
<div style="left:25px;top:668px;width:1135px;height:1px;background:#a0a0a0"></div>
<div class="t" style="left:26px;top:644px;font-size:15px;line-height:17px;letter-spacing:1.3px">指定下一点或</div>
<div class="mono" style="left:132px;top:646px;font-size:12px;line-height:17px;color:#000;transform:none">[</div>
<div class="t" style="left:138px;top:644px;font-size:15px;line-height:17px;letter-spacing:1px">放弃</div>
<div class="mono" style="left:172px;top:647px;font-size:12px;line-height:17px;color:#000;transform:scaleX(.7)">(</div>
<div class="mono" style="left:176px;top:647px;font-size:12px;line-height:17px;color:#000;transform:scaleX(1.05)">U</div>
<div class="mono" style="left:185px;top:647px;font-size:12px;line-height:17px;color:#000;transform:scaleX(.7)">)</div>
<div class="mono" style="left:194px;top:646px;font-size:12px;line-height:17px;color:#000;transform:none">]</div>
<div class="mono" style="left:202px;top:646px;font-size:13px;line-height:17px;color:#000;transform:none">:</div>
<div class="t" style="left:26px;top:669px;font-size:15px;line-height:17px;letter-spacing:1.3px">指定下一点或</div>
<div class="mono" style="left:132px;top:671px;font-size:12px;line-height:17px;color:#000;transform:none">[</div>
<div class="t" style="left:138px;top:669px;font-size:15px;line-height:17px;letter-spacing:1px">放弃</div>
<div class="mono" style="left:172px;top:672px;font-size:12px;line-height:17px;color:#000;transform:scaleX(.7)">(</div>
<div class="mono" style="left:176px;top:672px;font-size:12px;line-height:17px;color:#000;transform:scaleX(1.05)">U</div>
<div class="mono" style="left:185px;top:672px;font-size:12px;line-height:17px;color:#000;transform:scaleX(.7)">)</div>
<div class="mono" style="left:194px;top:671px;font-size:12px;line-height:17px;color:#000;transform:none">]</div>
<div class="mono" style="left:202px;top:671px;font-size:13px;line-height:17px;color:#000;transform:none">:</div>
<div style="left:1145px;top:646px;width:15px;height:22px;background:linear-gradient(90deg,#f4f4f4,#ececec)"></div>
<div style="left:1149px;top:650px;border-left:4px solid transparent;border-right:4px solid transparent;border-bottom:4px solid #444"></div>
<div style="left:1149px;top:660px;border-left:4px solid transparent;border-right:4px solid transparent;border-top:4px solid #444"></div>
<div style="left:1075px;top:669px;width:68px;height:18px;background:#ececec"></div>
<div style="left:1083px;top:674px;border-top:4px solid transparent;border-bottom:4px solid transparent;border-right:4px solid #444"></div>
<div style="left:1131px;top:674px;border-top:4px solid transparent;border-bottom:4px solid transparent;border-left:4px solid #444"></div>
<div style="left:1094px;top:670px;width:15px;height:16px;border:1px solid #9a9a9a;border-radius:2px;background:linear-gradient(#f6f6f6,#dadada)"></div>
<div style="left:1143px;top:669px;width:18px;height:20px;background:#f0f0f0"></div>
<div style="left:8px;top:689px;width:1160px;height:1px;background:#a0a0a0"></div>
<div style="left:8px;top:690px;width:1160px;height:23px;background:#f0eeee"></div>
<div style="left:13px;top:694px;width:186px;height:18px;border-top:1px solid #a0a0a0;border-left:1px solid #a0a0a0;border-right:1px solid #fff;border-bottom:1px solid #fff;background:#f0eeee"></div>
<div class="mono" style="left:15px;top:695px;line-height:20px;color:#000;transform:scaleX(.83)">3765.8403, 1219.9418, 0.0000</div>
<div style="left:203px;top:694px;width:28px;height:19px;border-top:1px solid #fff;border-left:1px solid #fff;border-right:1px solid #a0a0a0;border-bottom:1px solid #a0a0a0;background:#f0eeee"></div>
<div class="t" style="left:205px;top:696px;font-size:13px;line-height:17px;letter-spacing:-.9px">捕捉</div>
<div style="left:234px;top:694px;width:28px;height:19px;border-top:1px solid #fff;border-left:1px solid #fff;border-right:1px solid #a0a0a0;border-bottom:1px solid #a0a0a0;background:#f0eeee"></div>
<div class="t" style="left:236px;top:696px;font-size:13px;line-height:17px;letter-spacing:-.9px">栅格</div>
<div style="left:266px;top:694px;width:29px;height:19px;border-top:1px solid #fff;border-left:1px solid #fff;border-right:1px solid #a0a0a0;border-bottom:1px solid #a0a0a0;background:#f0eeee"></div>
<div class="t" style="left:268px;top:696px;font-size:13px;line-height:17px;letter-spacing:-.9px">正交</div>
<div style="left:299px;top:694px;width:29px;height:19px;border-top:1px solid #000;border-left:1px solid #000;border-right:1px solid #fff;border-bottom:1px solid #fff;background:#f6f5f5"></div>
<div class="t" style="left:301px;top:696px;font-size:13px;line-height:17px;letter-spacing:-.9px">极轴</div>
<div style="left:330px;top:694px;width:54px;height:19px;border-top:1px solid #000;border-left:1px solid #000;border-right:1px solid #fff;border-bottom:1px solid #fff;background:#f6f5f5"></div>
<div class="t" style="left:332px;top:696px;font-size:13px;line-height:17px;letter-spacing:-.9px">对象捕捉</div>
<div style="left:386px;top:694px;width:55px;height:19px;border-top:1px solid #000;border-left:1px solid #000;border-right:1px solid #fff;border-bottom:1px solid #fff;background:#f6f5f5"></div>
<div class="t" style="left:388px;top:696px;font-size:13px;line-height:17px;letter-spacing:-.9px">对象追踪</div>
<div style="left:443px;top:694px;width:29px;height:19px;border-top:1px solid #000;border-left:1px solid #000;border-right:1px solid #fff;border-bottom:1px solid #fff;background:#f6f5f5"></div>
<div class="mono" style="left:446px;top:696px;font-size:12px;line-height:18px;color:#000;transform:scaleX(.84)">DUCS</div>
<div style="left:474px;top:694px;width:25px;height:19px;border-top:1px solid #000;border-left:1px solid #000;border-right:1px solid #fff;border-bottom:1px solid #fff;background:#f6f5f5"></div>
<div class="mono" style="left:477px;top:696px;font-size:12px;line-height:18px;color:#000;transform:scaleX(.84)">DYN</div>
<div style="left:501px;top:694px;width:29px;height:19px;border-top:1px solid #fff;border-left:1px solid #fff;border-right:1px solid #a0a0a0;border-bottom:1px solid #a0a0a0;background:#f0eeee"></div>
<div class="t" style="left:503px;top:696px;font-size:13px;line-height:17px;letter-spacing:-.9px">线宽</div>
<div style="left:532px;top:694px;width:28px;height:19px;border-top:1px solid #000;border-left:1px solid #000;border-right:1px solid #fff;border-bottom:1px solid #fff;background:#f6f5f5"></div>
<div class="t" style="left:534px;top:696px;font-size:13px;line-height:17px;letter-spacing:-.9px">模型</div>
<div class="t" style="left:937px;top:696px;font-size:13px;line-height:17px;letter-spacing:-.5px">注释比例:</div>
<div class="mono" style="left:1000px;top:695px;line-height:20px;color:#000">1:1</div>
<div style="left:1021px;top:702px;border-left:4px solid transparent;border-right:4px solid transparent;border-top:5px solid #000"></div>
<svg style="left:1040px;top:695px" width="16" height="17" viewBox="0 0 16 17"><path d="M6.5 5 L9 10 L7.5 11 L11.5 15.5 H8 L6.5 13.5 L5 15.5 H1.5 L5.5 11 L4 10 Z" fill="#fff" stroke="#2a64c0" stroke-width="1.3" stroke-linejoin="round"/><circle cx="11.5" cy="4.5" r="3.5" fill="#fbf070" stroke="#e0c820" stroke-width=".8"/><path d="M10.5 8 H12.5 V9.5 H10.5 Z" fill="#889"/></svg>
<svg style="left:1064px;top:695px" width="16" height="17" viewBox="0 0 16 17"><path d="M6.5 5 L9 10 L7.5 11 L11.5 15.5 H8 L6.5 13.5 L5 15.5 H1.5 L5.5 11 L4 10 Z" fill="#fff" stroke="#b0b0b0" stroke-width="1.3" stroke-linejoin="round"/><path d="M15 1 L9 8" stroke="#a8a8a8" stroke-width="3"/><path d="M9.5 7.5 L7 10.5" stroke="#888" stroke-width="2"/></svg>
<div style="left:1089px;top:694px;width:24px;height:19px;border-top:1px solid #a0a0a0;border-left:1px solid #a0a0a0;background:#fafafa"></div>
<svg style="left:1093px;top:695px" width="16" height="17" viewBox="0 0 16 17"><defs><linearGradient id="glk" x1="0" y1="0" x2="0" y2="1"><stop offset="0" stop-color="#f8e040"/><stop offset=".5" stop-color="#fff8a0"/><stop offset="1" stop-color="#b89000"/></linearGradient></defs><path d="M8 7 V4 Q8 1 11 1 Q14 1 14 4 V6" stroke="#c8a010" stroke-width="2" fill="none"/><rect x="1" y="7" width="11" height="9" rx="2" fill="url(#glk)" stroke="#302800" stroke-width=".9"/><path d="M2 9.5 H11 M2 12 H11 M2 14.5 H11" stroke="#6a5800" stroke-width=".7"/></svg>
<div style="left:1119px;top:705px;border-left:4px solid transparent;border-right:4px solid transparent;border-top:4px solid #000"></div>
<div style="left:1135px;top:694px;width:16px;height:16px;border:1px solid #1d3b7a;background:#fff"></div>
<div style="left:1137px;top:696px;width:12px;height:12px;border:1px solid #1d3b7a;background:linear-gradient(135deg,#dbe8f6,#8fb0dc)"></div>
<svg style="left:1155px;top:702px" width="11" height="11" viewBox="0 0 11 11"><g fill="#bbb"><rect x="8" y="2" width="2" height="2"/><rect x="5" y="5" width="2" height="2"/><rect x="8" y="5" width="2" height="2"/><rect x="2" y="8" width="2" height="2"/><rect x="5" y="8" width="2" height="2"/><rect x="8" y="8" width="2" height="2"/></g></svg>
<svg style="left:36px;top:108px" width="1087" height="504" viewBox="36 108 1087 504"><path d="M178 272.5 H686" stroke="#fff" stroke-width="1" shape-rendering="crispEdges"/><path d="M155 385.5 H209 M220 385.5 H271 M282 385.5 H332 M344 385.5 H394 M405 385.5 H456 M467 385.5 H517 M528 385.5 H579 M590 385.5 H641 M652 385.5 H701 " stroke="#fff" stroke-width="1" shape-rendering="crispEdges"/><path d="M701 385.5 H705" stroke="#1a3a8a" stroke-width="1" shape-rendering="crispEdges"/><path d="M706 385.5 L931 321.5" stroke="#fff" stroke-width="1" shape-rendering="crispEdges"/><g stroke="#c0c0c0" stroke-width="1" stroke-dasharray="1 3" fill="none" shape-rendering="crispEdges"><path d="M691.5 337 L917.5 273.5"/><path d="M705.5 385 L691.5 337"/><path d="M917.5 273.5 L931 321"/><path d="M709 385.5 H940"/><path d="M931 321.5 A235 235 0 0 1 940 385.5"/></g><rect x="689.5" y="335" width="4" height="4" fill="#fff"/><path d="M914.5 272 H921 L918 276 Z" fill="#fff"/><path d="M940 383 L942.5 385.5 L940 388 L937.5 385.5 Z" fill="#fff"/><path d="M705.5 381 V390 M706 385.5 H710" stroke="#f2c488" stroke-width="1" shape-rendering="crispEdges"/><path d="M883 321.5 H979 M931.5 274 V370" stroke="#fff" stroke-width="1" shape-rendering="crispEdges"/><rect x="148" y="434" width="1" height="1" fill="#888"/><g stroke="#fff" stroke-width="1" fill="none" shape-rendering="crispEdges"><path d="M70.5 552 V595"/><path d="M76 600.5 H119"/><rect x="65.5" y="595.5" width="10" height="10"/><path d="M70.5 595 V606 M65 600.5 H76"/></g><g stroke="#fff" stroke-width="1" fill="none"><path d="M70.5 540 L66.5 552 H74.5 Z"/><path d="M70.5 541 V552"/><path d="M130.5 600.5 L119 596 V605 Z"/><path d="M120 600.5 H130"/><path d="M67.5 520 L72.5 526.5 L77.5 520 M72.5 526.5 V533"/><path d="M139.5 595 L149.5 607 M149.5 595 L139.5 607"/></g></svg>
<div style="left:771px;top:295px;width:67px;height:22px;background:#fff;border:1px solid #a0a0a0"></div>
<div style="left:775px;top:298px;width:52px;height:16px;background:#3399ff"></div>
<div class="t" style="left:775px;top:298px;font-size:13px;line-height:16px;color:#fff;letter-spacing:-.3px">1027.351</div>
<div style="left:947px;top:338px;width:107px;height:22px;background:#1c1c5e;border:1px solid #a0a0c8"></div>
<div class="t" style="left:953px;top:341px;font-size:12px;line-height:15px;color:#c8c8dc;letter-spacing:-.4px">指定下一点或</div>
<svg style="left:1039px;top:343px" width="11" height="11" viewBox="0 0 11 11"><rect x="0.5" y="0.5" width="10" height="10" fill="#fff" stroke="#8080b0"/><path d="M5.5 2 V7 M3 5 L5.5 7.5 L8 5 M2.5 8.5 H8.5" stroke="#1c1c5e" stroke-width="1.3" fill="none"/></svg>
<div style="left:920px;top:343px;width:34px;height:22px;background:#1c1c5e;border:1px solid #a0a0c8"></div>
<div class="t" style="left:924px;top:346px;font-size:13px;line-height:15px;color:#e0e0f0">16°</div>
<svg style="left:12px;top:120px" width="16" height="16" viewBox="0 0 16 16"><path d="M2.5 13.5 L13.5 2.5" stroke="#111" stroke-width="1.3"/><rect x="1.0" y="12.0" width="3" height="3" fill="#1565d8"/><rect x="12.0" y="1.0" width="3" height="3" fill="#1565d8"/></svg>
<svg style="left:12px;top:142px" width="16" height="16" viewBox="0 0 16 16"><path d="M2 15 L14.5 2.5" stroke="#111" stroke-width="1.3"/><path d="M1 16 L2 11 L6 15 Z M15.5 1 L10.5 2 L14.5 6 Z" fill="#111"/><rect x="7.0" y="7.5" width="3" height="3" fill="#1565d8"/></svg>
<svg style="left:12px;top:164px" width="16" height="16" viewBox="0 0 16 16"><path d="M1.5 11 H10.5 M10.5 4.5 A3.3 3.3 0 0 1 10.5 11" stroke="#111" stroke-width="1.2" fill="none"/><rect x="0.0" y="9.5" width="3" height="3" fill="#1565d8"/><rect x="9.0" y="9.5" width="3" height="3" fill="#1565d8"/><rect x="9.0" y="3.0" width="3" height="3" fill="#1565d8"/></svg>
<svg style="left:12px;top:186px" width="16" height="16" viewBox="0 0 16 16"><path d="M8 1.5 L14.5 6.5 L12 14.5 H4 L1.5 6.5 Z" fill="#dbe7f3" stroke="#111" stroke-width="1.2"/></svg>
<svg style="left:12px;top:208px" width="16" height="16" viewBox="0 0 16 16"><rect x="1.5" y="4.5" width="13" height="8" fill="#dbe7f3" stroke="#111" stroke-width="1.2"/><rect x="0.0" y="11.0" width="3" height="3" fill="#1565d8"/><rect x="13.0" y="3.0" width="3" height="3" fill="#1565d8"/></svg>
<svg style="left:12px;top:230px" width="16" height="16" viewBox="0 0 16 16"><path d="M1.5 14 Q2.5 4 13.5 2" stroke="#111" stroke-width="1.2" fill="none"/><rect x="0.0" y="12.5" width="3" height="3" fill="#1565d8"/><rect x="3.5" y="4.5" width="3" height="3" fill="#1565d8"/><rect x="12.0" y="0.5" width="3" height="3" fill="#1565d8"/></svg>
<svg style="left:12px;top:252px" width="16" height="16" viewBox="0 0 16 16"><circle cx="8" cy="8.5" r="6.5" fill="#dbe7f3" stroke="#111" stroke-width="1.4"/><path d="M7 9.5 L12 4.5" stroke="#1565d8" stroke-width="1.3"/><rect x="5.5" y="8.0" width="3" height="3" fill="#1565d8"/></svg>
<svg style="left:12px;top:274px" width="16" height="16" viewBox="0 0 16 16"><path d="M4 2 Q7 0 9 2.5 Q12 1.5 12.5 5 Q15.5 6 14 9 Q15.5 12.5 12 13 Q11 15.5 8 14.5 Q5 16 4 13 Q0.5 12.5 2 9.5 Q0 7 2.5 5.5 Q1.5 2.5 4 2 Z" fill="#dbe7f3" stroke="#111" stroke-width="1.3"/></svg>
<svg style="left:12px;top:296px" width="16" height="16" viewBox="0 0 16 16"><path d="M1.5 14 Q2.5 7 6 7 Q9 7 9 9 Q10 11 13 8 L14.5 2" stroke="#111" stroke-width="1.2" fill="none"/></svg>
<svg style="left:12px;top:318px" width="16" height="16" viewBox="0 0 16 16"><ellipse cx="8" cy="8" rx="6.5" ry="4" fill="#dbe7f3" stroke="#111" stroke-width="1.3"/><rect x="0.0" y="6.5" width="3" height="3" fill="#1565d8"/><rect x="13.0" y="6.5" width="3" height="3" fill="#1565d8"/><rect x="6.5" y="2.5" width="3" height="3" fill="#1565d8"/></svg>
<svg style="left:12px;top:340px" width="16" height="16" viewBox="0 0 16 16"><path d="M2 10 Q0 3 8 3 Q15 3 15 7 Q14 10 8 11" stroke="#111" stroke-width="1.2" fill="none"/><rect x="0.5" y="4.5" width="3" height="3" fill="#1565d8"/><rect x="5.5" y="9.5" width="3" height="3" fill="#1565d8"/></svg>
<svg style="left:12px;top:362px" width="16" height="16" viewBox="0 0 16 16"><path d="M5 0.5 H13 L15.5 3 V14 H5 Z" fill="#dbe7f3" stroke="#6a7a9a"/><rect x="1.5" y="4.5" width="8" height="6" fill="#e8e090" stroke="#1d3b7a"/><circle cx="8.5" cy="10.5" r="3.5" fill="#e8e090" stroke="#1d3b7a"/><path d="M12 16 L16 12 V16 Z" fill="#000"/><rect x="0.0" y="9.0" width="3" height="3" fill="#1565d8"/></svg>
<svg style="left:12px;top:384px" width="16" height="16" viewBox="0 0 16 16"><rect x="3.5" y="2.5" width="8" height="6" fill="#e8e090" stroke="#1d3b7a"/><circle cx="10.5" cy="9.5" r="3.5" fill="#e8e090" stroke="#1d3b7a"/><rect x="2.0" y="7.0" width="3" height="3" fill="#1565d8"/></svg>
<svg style="left:12px;top:406px" width="16" height="16" viewBox="0 0 16 16"><rect x="6.75" y="7.25" width="2.5" height="2.5" fill="#1565d8"/></svg>
<svg style="left:12px;top:428px" width="16" height="16" viewBox="0 0 16 16"><rect x="3" y="3" width="10" height="10" fill="url(#hp)"/><defs><pattern id="hp" width="2.5" height="2.5" patternUnits="userSpaceOnUse" patternTransform="rotate(45)"><rect width="1.2" height="2.5" fill="#3a5a9a"/><rect x="1.2" width="1.3" height="2.5" fill="#fff"/></pattern></defs><path d="M0.5 3.5 H15.5 M0.5 12.5 H15.5 M3.5 0.5 V15.5 M12.5 0.5 V15.5" stroke="#3a5a9a" stroke-width="1.3"/></svg>
<svg style="left:12px;top:450px" width="16" height="16" viewBox="0 0 16 16"><defs><linearGradient id="gg" x1="0" y1="0" x2="1" y2="1"><stop offset="0" stop-color="#223"/><stop offset=".6" stop-color="#6a6a40"/><stop offset="1" stop-color="#d8c840"/></linearGradient></defs><rect x="3" y="3" width="10" height="10" fill="url(#gg)"/><path d="M0.5 3.5 H15.5 M0.5 12.5 H15.5 M3.5 0.5 V15.5 M12.5 0.5 V15.5" stroke="#111" stroke-width="1.3"/></svg>
<svg style="left:12px;top:472px" width="16" height="16" viewBox="0 0 16 16"><path d="M1.5 2.5 H10 L14.5 9 V14.5 H1.5 Z" fill="#dbe7f3" stroke="#2a5a9a" stroke-width="1.2"/><circle cx="7" cy="8" r="2.8" fill="none" stroke="#2a5a9a" stroke-width="1.2"/></svg>
<svg style="left:12px;top:494px" width="16" height="16" viewBox="0 0 16 16"><rect x="1.5" y="2.5" width="13" height="12" rx="1" fill="#6a8ed0" stroke="#3a5a9a"/><path d="M1.5 6.5 H14.5 M1.5 10 H14.5 M5.5 6 V14.5 M10 6 V14.5" stroke="#fff" stroke-width="1.1"/></svg>
<svg style="left:12px;top:516px" width="16" height="16" viewBox="0 0 16 16"><path d="M2.5 14 L7.2 2 H8.8 L13.5 14 M4.5 10 H11.5" stroke="#111" stroke-width="1.9" fill="none"/></svg>
<svg style="left:1147px;top:120px" width="16" height="16" viewBox="0 0 16 16"><path d="M1 14.5 H16" stroke="#111" stroke-width="1"/><path d="M15 1.5 L10 6.5" stroke="#222" stroke-width="5.6" stroke-linecap="round"/><path d="M15 1.5 L10 6.5" stroke="#e8c020" stroke-width="4" stroke-linecap="round"/><path d="M10.2 6.3 L7.2 9.3" stroke="#fff" stroke-width="4"/><path d="M8.5 8 L7 9.5" stroke="#30a0a0" stroke-width="4"/><path d="M7.2 9.3 L4.8 11.7" stroke="#222" stroke-width="5.6" stroke-linecap="round"/><path d="M7.2 9.3 L4.8 11.7" stroke="#e05040" stroke-width="4" stroke-linecap="round"/></svg>
<svg style="left:1147px;top:142px" width="16" height="16" viewBox="0 0 16 16"><circle cx="3.5" cy="4" r="2.8" fill="#cfe0f0" stroke="#111" stroke-width="1.1"/><circle cx="9.5" cy="11.5" r="3.2" fill="#cfe0f0" stroke="#111" stroke-width="1.1"/><circle cx="12.5" cy="12.5" r="3" fill="#b8cde4" stroke="#111" stroke-width="1.1"/><path d="M6 2.5 Q10 0.5 13 4.5" stroke="#1d3b7a" stroke-width="1.6" fill="none"/><path d="M10.5 4.5 H15.5 L13 7.5 Z" fill="#1d3b7a"/></svg>
<svg style="left:1147px;top:164px" width="16" height="16" viewBox="0 0 16 16"><path d="M1.5 13.5 L6 3 V13.5 Z M14.5 13.5 L10 3 V13.5 Z" fill="#dbe7f3" stroke="#111" stroke-width="1.2"/><path d="M8 0.5 V15.5" stroke="#1565d8" stroke-width="1"/></svg>
<svg style="left:1147px;top:186px" width="16" height="16" viewBox="0 0 16 16"><path d="M15.5 8.5 H10 V5.5 Q10 1.5 7 1.5 Q4 1.5 4 5.5 V8.5 Q0.8 8.5 0.8 11.3 Q0.8 14.5 4 14.5 H15.5" stroke="#111" stroke-width="1.3" fill="none"/><path d="M6.5 5 V11.5 H15.5" stroke="#1565d8" stroke-width="1.3" fill="none"/></svg>
<svg style="left:1147px;top:208px" width="16" height="16" viewBox="0 0 16 16"><g fill="#e3ecf6" stroke="#111" stroke-width="1.3"><rect x="1.5" y="1.5" width="5.5" height="5.5"/><rect x="9.5" y="1.5" width="5.5" height="5.5"/><rect x="1.5" y="9.5" width="5.5" height="5.5"/><rect x="9.5" y="9.5" width="5.5" height="5.5"/></g></svg>
<svg style="left:1147px;top:230px" width="16" height="16" viewBox="0 0 16 16"><path d="M8 1 V15 M1 8 H15" stroke="#2a5a9a" stroke-width="2"/><path d="M8 0 L5 3.5 H11 Z M8 16 L5 12.5 H11 Z M0 8 L3.5 5 V11 Z M16 8 L12.5 5 V11 Z" fill="#2a5a9a"/></svg>
<svg style="left:1147px;top:252px" width="16" height="16" viewBox="0 0 16 16"><path d="M5 3.5 A5.8 5.8 0 1 0 11.5 3" stroke="#2a5a9a" stroke-width="1.8" fill="none"/><path d="M3 0.5 L8 1.5 L4.5 6 Z" fill="#2a5a9a"/></svg>
<svg style="left:1147px;top:274px" width="16" height="16" viewBox="0 0 16 16"><defs><linearGradient id="gsc" x1="0" y1="0" x2="1" y2="1"><stop offset="0" stop-color="#fff"/><stop offset="1" stop-color="#a8c4e0"/></linearGradient></defs><rect x="1.5" y="0.5" width="14" height="14" fill="url(#gsc)" stroke="#2a5a9a" stroke-width="1.2"/><path d="M1.5 7.5 H8.5 V14.5 H1.5 Z" fill="none" stroke="#111" stroke-width="1.2" stroke-dasharray="1.2 1.2"/></svg>
<svg style="left:1147px;top:296px" width="16" height="16" viewBox="0 0 16 16"><defs><linearGradient id="gst" x1="0" y1="0" x2="1" y2="1"><stop offset="0" stop-color="#fff"/><stop offset="1" stop-color="#a8c4e0"/></linearGradient></defs><path d="M6.5 1 H9 L15.5 14.5 H6.5 Z" fill="url(#gst)" stroke="#2a5a9a" stroke-width="1.1"/><path d="M6.5 1 H1.5 V14.5 H6.5" fill="none" stroke="#111" stroke-width="1.4"/><path d="M6.5 1.5 V14" stroke="#111" stroke-width="1" stroke-dasharray="1 1"/></svg>
<svg style="left:1147px;top:318px" width="16" height="16" viewBox="0 0 16 16"><path d="M0.5 8.5 H5" stroke="#111" stroke-width="1.3"/><path d="M6 12 L9 5" stroke="#1565d8" stroke-width="1.4"/><path d="M8 8.5 H15.5" stroke="#1565d8" stroke-width="1.2" stroke-dasharray="1.5 1"/></svg>
<svg style="left:1147px;top:340px" width="16" height="16" viewBox="0 0 16 16"><path d="M0.5 8.5 H4" stroke="#111" stroke-width="1.3"/><path d="M5 8.5 H9" stroke="#1565d8" stroke-width="1.2" stroke-dasharray="1.5 1"/><path d="M10 12 L13.5 4" stroke="#1565d8" stroke-width="1.4"/></svg>
<svg style="left:1147px;top:362px" width="16" height="16" viewBox="0 0 16 16"><rect x="1.5" y="4.5" width="13" height="10" fill="#dbe7f3" stroke="#111" stroke-width="1.3"/><rect x="8" y="2" width="3" height="3" fill="#2a5a9a"/></svg>
<svg style="left:1147px;top:384px" width="16" height="16" viewBox="0 0 16 16"><rect x="1.5" y="3.5" width="13" height="10" fill="#e3ecf6" stroke="#111" stroke-width="1.3"/><rect x="3" y="2" width="3" height="3" fill="#3a68a8"/><rect x="10" y="2" width="3" height="3" fill="#3a68a8"/></svg>
<svg style="left:1147px;top:406px" width="16" height="16" viewBox="0 0 16 16"><path d="M0.5 8.5 H15.5" stroke="#111" stroke-width="2"/><path d="M4 5 L8 8.5 L4 12 Z M12 5 L8 8.5 L12 12 Z" fill="#2a5a9a"/></svg>
<svg style="left:1147px;top:428px" width="16" height="16" viewBox="0 0 16 16"><path d="M1.5 2.5 H9 M1.5 2.5 V10" stroke="#111" stroke-width="1" stroke-dasharray="1 1" shape-rendering="crispEdges"/><path d="M1.5 10 V16" stroke="#111" stroke-width="1.4"/><path d="M10 2.5 H16" stroke="#111" stroke-width="1.4"/><path d="M1.5 10 L10 2.5" stroke="#1565d8" stroke-width="1.4"/></svg>
<svg style="left:1147px;top:450px" width="16" height="16" viewBox="0 0 16 16"><path d="M1.5 2.5 H9 M1.5 2.5 V10" stroke="#111" stroke-width="1" stroke-dasharray="1 1" shape-rendering="crispEdges"/><path d="M1.5 11 V16" stroke="#111" stroke-width="1.4"/><path d="M9 2.5 H16" stroke="#111" stroke-width="1.4"/><path d="M1.5 11 Q1.5 2.5 10 2.5" stroke="#1565d8" stroke-width="1.6" fill="none"/></svg>
<svg style="left:1147px;top:472px" width="16" height="16" viewBox="0 0 16 16"><path d="M1.5 12.5 L9 6 L11.5 8.5 L4 15 Z" fill="#d82020" stroke="#600" stroke-width=".6"/><path d="M3 10.5 L6 13 M5.5 8.5 L8.5 11" stroke="#f4e040" stroke-width="1.2"/><path d="M10.5 6 L15.5 1" stroke="#8aa" stroke-width="1.2" stroke-dasharray="1 1"/><path d="M1 8 L3 9 M0.5 11 L2 11 M7 15.5 L6 13.5 M2 6 L4 8" stroke="#f0c020" stroke-width="1.2"/><circle cx="14" cy="2.5" r="1.5" fill="none" stroke="#9ab" stroke-width=".8"/></svg>
<svg style="left:1147px;top:511.0px" width="16" height="16" viewBox="0 0 16 16"><rect x="1.5" y="1.5" width="9" height="9" fill="#9ab8d8" stroke="#2a5a9a"/><rect x="4.5" y="4.5" width="8" height="8" fill="#4f78b0" stroke="#2a4a8a"/><rect x="7.5" y="7.5" width="8" height="8" fill="#dbe7f3" stroke="#2a5a9a"/></svg>
<svg style="left:1147px;top:533.5px" width="16" height="16" viewBox="0 0 16 16"><rect x="1.5" y="1.5" width="8" height="8" fill="#dbe7f3" stroke="#2a5a9a"/><rect x="4.5" y="4.5" width="8" height="8" fill="#4f78b0" stroke="#2a4a8a"/><rect x="7.5" y="7.5" width="8" height="8" fill="#dbe7f3" stroke="#2a5a9a"/></svg>
<svg style="left:1147px;top:556px" width="16" height="16" viewBox="0 0 16 16"><rect x="4.5" y="4.5" width="11" height="11" fill="#dbe7f3" stroke="#2a5a9a"/><rect x="1.5" y="1.5" width="11" height="10" fill="#4f78b0" stroke="#2a4a8a"/></svg>
<svg style="left:1147px;top:578px" width="16" height="16" viewBox="0 0 16 16"><rect x="1.5" y="1.5" width="11" height="10" fill="#4f78b0" stroke="#2a4a8a"/><rect x="4.5" y="4.5" width="11" height="11" fill="#dbe7f3" stroke="#2a5a9a"/></svg>
<div style="left:1px;top:28px;width:1px;height:692px;background:#fbfdff"></div>
<div style="left:1174px;top:28px;width:1px;height:692px;background:linear-gradient(#e8f4ff,#5fe0ff 30%,#5fe0ff)"></div>
<div style="left:1px;top:719px;width:1174px;height:1px;background:#5fe0ff"></div>
<div style="left:8px;top:691px;width:1160px;height:1px;background:#8a8a8a"></div>
<div style="left:8px;top:692px;width:1160px;height:1px;background:#fff"></div>
</body></html>
